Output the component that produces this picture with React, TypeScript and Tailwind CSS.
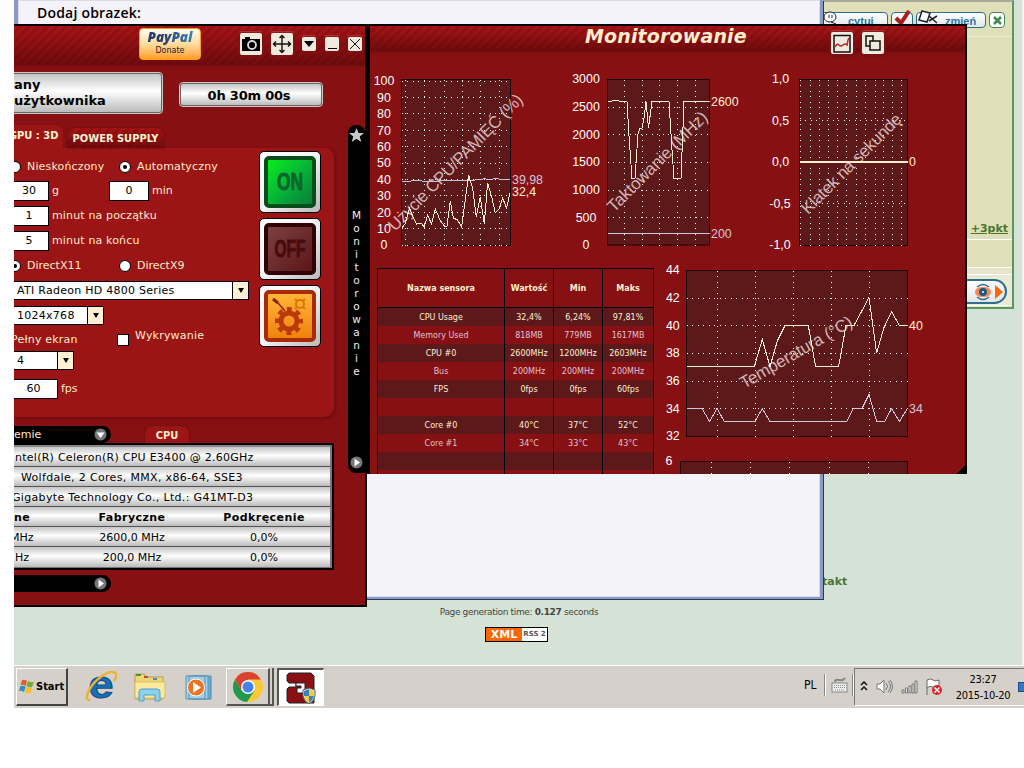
import { ReactNode } from "react";

type Line = { points: string; color: string; width?: number };
type Label = { x: number; y: number; text: string; color?: string; start?: boolean };

type ChartProps = {
  className: string;
  viewBox: string;
  plot: [number, number, number, number];
  gridX: number[];
  gridY: number[];
  lines?: Line[];
  labels: Label[];
  mark?: { x: number; y: number; angle: number; length: number; text: string };
};

const CREAM = "#fff0d2";
const BLUE = "#cfc8dc";

const Chart = ({ className, viewBox, plot, gridX, gridY, lines = [], labels, mark }: ChartProps) => {
  const [x, y, w, h] = plot;
  return (
    <svg className={className} viewBox={viewBox}>
      <rect x={x} y={y} width={w} height={h} fill="#5d181a" stroke="#1d0506" />
      <g stroke="#fff" strokeWidth="1" strokeDasharray="1 4.5" shapeRendering="crispEdges">
        {gridX.map((gx) => <line key={gx} x1={gx} x2={gx} y1={y} y2={y + h + 1} />)}
        {gridY.map((gy) => <line key={gy} x1={x} x2={x + w} y1={gy} y2={gy} />)}
      </g>
      {mark && (
        <text
          x={mark.x}
          y={mark.y}
          textLength={mark.length}
          transform={`rotate(${mark.angle} ${mark.x} ${mark.y})`}
          fontSize="17"
          fill="#d3b4b4"
        >
          {mark.text}
        </text>
      )}
      {lines.map((l, i) => (
        <polyline key={i} points={l.points} fill="none" stroke={l.color} strokeWidth={l.width ?? 1} shapeRendering="crispEdges" />
      ))}
      {labels.map((l, i) => (
        <text key={i} x={l.x} y={l.y + 4.4} fontSize="12.4" textAnchor={l.start ? "start" : "middle"} fill={l.color ?? "#fff"}>
          {l.text}
        </text>
      ))}
    </svg>
  );
};

const CpuChart = () => (
  <Chart
    className="w-[190px] h-[202px]"
    viewBox="370 60 190 202"
    plot={[401.5, 79.5, 109, 166]}
    gridX={[405.5, 424.5, 444.5, 462.5, 480.5, 499.5]}
    gridY={[81.5, 97.5, 113.5, 130.5, 146.5, 163.5, 179.5, 195.5, 212.5, 228.5, 245.5]}
    lines={[
      { color: "#c3c3dc", points: "402,181.5 420,180.5 424,181.5 455,180.5 470,180.5 480,179.5 484,178.8 490,179.5 494,178.8 510,179.5" },
      {
        color: CREAM,
        points:
          "402,228 405,224 409.6,208 413,217 416.6,224 421,223 424.3,227 427.6,215 431.6,224 435.3,209 440,220 445,227 447,226 450.3,201 453.3,218 457.6,220 461.6,227 468.6,175 472.6,188 476.3,217 480.3,197 484.3,224 487.6,183 492,198 495.3,213 499.3,209 502.6,198 506.6,208 510,193",
      },
    ]}
    mark={{ x: 395, y: 232, angle: -45.5, length: 184, text: "Użycie CPU/PAMIĘĆ (%)" }}
    labels={[
      ...[100, 90, 80, 70, 60, 50, 40, 30, 20, 10, 0].map((v) => ({ x: 384, y: 245 - v * 1.64, text: String(v) })),
      { x: 512, y: 180, text: "39,98", color: BLUE, start: true },
      { x: 512, y: 192, text: "32,4", color: CREAM, start: true },
    ]}
  />
);

const ClockChart = () => (
  <Chart
    className="w-[190px] h-[202px]"
    viewBox="560 60 190 202"
    plot={[607.5, 79.5, 102, 165.5]}
    gridX={[624.5, 642.5, 659.5, 677.5, 695.5]}
    gridY={[107.5, 134.5, 162.5, 190.5, 217.5]}
    lines={[
      {
        color: CREAM,
        points:
          "608,101.5 611,101.5 613,100.5 618,100.5 620,101.5 627,101.5 629,136 632,178.5 635,178.5 638,134 640,128 642,128 644,118 646,101.5 648.5,128 652,101.5 669,101.5 672,150 674,178.5 681,178.5 684,101.5 710,101.5",
      },
      { color: BLUE, points: "608,233.5 710,233.5" },
    ]}
    mark={{ x: 614, y: 213, angle: -45, length: 134, text: "Taktowanie (MHz)" }}
    labels={[
      ...[3000, 2500, 2000, 1500, 1000, 500, 0].map((v) => ({ x: 586, y: 245 - (v / 500) * 27.7, text: String(v) })),
      { x: 711, y: 101.5, text: "2600", color: CREAM, start: true },
      { x: 711, y: 233.5, text: "200", color: BLUE, start: true },
    ]}
  />
);

const FpsChart = () => (
  <Chart
    className="w-[200px] h-[202px]"
    viewBox="750 60 200 202"
    plot={[799.5, 79.5, 108, 166]}
    gridX={[800.5, 810.5, 819.5, 828.5, 837.5, 846.5, 856.5, 865.5, 875.5, 883.5, 892.5, 901.5]}
    gridY={[120.5, 203.5]}
    lines={[{ color: CREAM, points: "800,162 908,162", width: 2 }]}
    mark={{ x: 808, y: 215, angle: -45, length: 134, text: "Klatek na sekundę" }}
    labels={[
      { x: 780.6, y: 79, text: "1,0" },
      { x: 780.6, y: 121, text: "0,5" },
      { x: 780.6, y: 162, text: "0,0" },
      { x: 780, y: 204, text: "-0,5" },
      { x: 780, y: 245, text: "-1,0" },
      { x: 909, y: 162, text: "0", color: CREAM, start: true },
    ]}
  />
);

const TempChart = () => (
  <Chart
    className="w-[296px] h-[193px]"
    viewBox="654 262 296 193"
    plot={[686.5, 270.5, 221, 166]}
    gridX={[717.5, 755.5, 793.5, 831.5, 869.5]}
    gridY={[298.5, 325.5, 353.5, 381.5, 408.5]}
    lines={[
      {
        color: CREAM,
        points:
          "687,366.5 754.3,366.5 762.3,339.5 770,366.5 777.3,341 785,325.5 808.3,325.5 815.6,366.5 838.6,366.5 846,325.5 854,325.5 869,297.5 876.6,353 884,327.5 891.6,311.5 899.3,325.5 908,325.5",
      },
      {
        color: BLUE,
        points:
          "687,408.5 702,408.5 709.6,421.5 717,408.5 724.3,421.5 755,421.5 762.3,408.5 770,421.5 846.6,421.5 853.3,408.5 862,408.5 869,394.5 876.6,421.5 884.6,421.5 891.6,408.5 899.3,421.5 907.5,408.5",
      },
    ]}
    mark={{ x: 744, y: 389, angle: -30, length: 127, text: "Temperatura (°C)" }}
    labels={[
      ...[44, 42, 40, 38, 36, 34, 32].map((v) => ({ x: 672.8, y: 436 - (v - 32) * 13.85, text: String(v) })),
      { x: 909, y: 325.5, text: "40", color: CREAM, start: true },
      { x: 909, y: 408.5, text: "34", color: BLUE, start: true },
    ]}
  />
);

const VoltageChart = () => (
  <Chart
    className="w-[296px] h-[60px]"
    viewBox="654 455 296 60"
    plot={[680.5, 461.5, 227, 80]}
    gridX={[711.5, 750.5, 789.5, 829.5, 868.5]}
    gridY={[]}
    labels={[{ x: 669, y: 461, text: "6" }]}
  />
);

const sensors = [
  ["CPU Usage", "32,4%", "6,24%", "97,81%"],
  ["Memory Used", "818MB", "779MB", "1617MB"],
  ["CPU #0", "2600MHz", "1200MHz", "2603MHz"],
  ["Bus", "200MHz", "200MHz", "200MHz"],
  ["FPS", "0fps", "0fps", "60fps"],
  ["", "", "", ""],
  ["Core #0", "40°C", "37°C", "52°C"],
  ["Core #1", "34°C", "33°C", "43°C"],
  ["", "", "", ""],
  ["", "", "", ""],
];

const SensorTable = () => (
  <div className="mt-[6px] ml-[7px] w-[277px] shrink-0 border border-black text-[8px] text-[#fff0d2]">
    <div className="grid h-[39px] grid-cols-[127px_49px_49px_50px] divide-x divide-black border-b border-black text-center font-bold leading-[39px]">
      <div>Nazwa sensora</div>
      <div>Wartość</div>
      <div>Min</div>
      <div>Maks</div>
    </div>
    {sensors.map((row, i) => (
      <div
        key={i}
        className={`grid h-[18px] grid-cols-[127px_49px_49px_50px] divide-x divide-black text-center leading-[19px] ${
          i % 2 == 0 ? "bg-[#5d181a]" : "text-[#dfc3d3]"
        }`}
      >
        {row.map((cell, j) => <div key={j}>{cell}</div>)}
      </div>
    ))}
  </div>
);

const Stripes = ({ className, children }: { className: string; children?: ReactNode }) => (
  <div
    className={`bg-[repeating-linear-gradient(135deg,#0000_0px,#0000_3px,#50000030_3.5px,#50000030_6px,#0000_6.5px),linear-gradient(#a81416,#700c0e)] ${className}`}
  >
    {children}
  </div>
);

const IconButton = ({ className, children }: { className: string; children: ReactNode }) => (
  <div className={`flex shrink-0 items-center justify-center rounded-[2px] bg-[#f0e9de] shadow-[0_1px_2px_2px_#7c1012,0_-1px_1px_1px_#c83c3c] ${className}`}>
    {children}
  </div>
);

const MonitorWindow = () => (
  <div className="absolute left-[353px] top-6 h-[450px] w-[600px] overflow-hidden border-t-2 border-l-3 border-r-2 border-black bg-[#861012]">
    <Stripes className="flex h-[24px] justify-between shadow-[0_1px_3px_#5b080a]">
      <h1 className="ml-[215px] text-[19px] leading-[20px] font-bold italic tracking-[0.15px] text-[#ffedce]">Monitorowanie</h1>
      <div className="mr-[81px] mt-[6px] flex gap-[9px]">
        <IconButton className="h-[22px] w-[22px]">
          <svg width="18" height="19" fill="none" stroke="#111" strokeWidth="1.5">
            <rect x="1" y="1.5" width="16" height="16.5" />
            <path d="M2 13q2-4 4-2t4 0 4 0l1-5 1-2" stroke="#b3282a" />
          </svg>
        </IconButton>
        <IconButton className="h-[22px] w-[22px]">
          <svg width="16" height="16" fill="#f0e9de" stroke="#111" strokeWidth="1.5">
            <rect x="1" y="1" width="7" height="10" />
            <rect x="5" y="6" width="10" height="9" />
          </svg>
        </IconButton>
      </div>
    </Stripes>
    <div className="mt-[10px] flex font-['Liberation_Sans',sans-serif]">
      <CpuChart />
      <ClockChart />
      <FpsChart />
    </div>
    <div className="flex">
      <SensorTable />
      <div className="flex shrink-0 flex-col font-['Liberation_Sans',sans-serif]">
        <TempChart />
        <VoltageChart />
      </div>
    </div>
    <div className="absolute right-0 bottom-0 size-2 bg-[linear-gradient(135deg,#0000_50%,#000_50%)]" />
  </div>
);

const SILVER = "bg-linear-to-b from-[#c4c4c4] via-white via-45% to-[#bcbcbc]";

const Radio = ({ label, checked, className = "" }: { label: string; checked?: boolean; className?: string }) => (
  <div className={`flex items-center gap-[6px] ${className}`}>
    <span className="flex size-[12px] items-center justify-center rounded-full border border-black bg-white">
      {checked && <span className="size-1 rounded-full bg-black" />}
    </span>
    {label}
  </div>
);

const NumberField = ({ value, className }: { value: string; className: string }) => (
  <span className={`block h-5 border border-black bg-white text-center leading-[18px] text-black ${className}`}>{value}</span>
);

const Select = ({ value, className }: { value: string; className: string }) => (
  <div className={`flex h-[19px] justify-between border border-l-0 border-black bg-white pl-[3px] leading-[17px] tracking-[0.27px] text-black ${className}`}>
    {value}
    <span className="flex w-4 items-center justify-center border-l border-black bg-[#fff0d5]">
      <svg width="6" height="5"><path d="M0 0h6L3 5z" /></svg>
    </span>
  </div>
);

const PowerButton = ({ tone, children }: { tone: string; children: ReactNode }) => (
  <div className="size-[62px] rounded-[5px] border border-black bg-linear-to-br from-white via-[#f3f3f3] to-[#b9b9b9] p-1">
    <div className={`flex size-full items-center justify-center rounded-[5px] border-[4px] ${tone}`}>{children}</div>
  </div>
);

const FaceText = ({ text, fill }: { text: string; fill: string }) => (
  <svg width="40" height="30">
    <text x="20" y="23" textAnchor="middle" textLength={text == "ON" ? 26 : 31} lengthAdjust="spacingAndGlyphs" fontSize="24" fontWeight="bold" stroke={fill} fill={fill} fontFamily="Liberation Sans, sans-serif">
      {text}
    </text>
  </svg>
);

const Gears = () => (
  <svg width="42" height="42" viewBox="0 0 42 42" fill="none">
    <circle cx="20" cy="26" r="8" stroke="#b93a0a" strokeWidth="5" />
    <circle cx="20" cy="26" r="12" stroke="#b93a0a" strokeWidth="4" strokeDasharray="5 4.42" strokeDashoffset="2.5" />
    <path d="M4 4l5 4" stroke="#8d2208" strokeWidth="3" />
    <path d="M9 8l7 8" stroke="#8d2208" strokeWidth="1.5" />
    <circle cx="31" cy="9" r="4" stroke="#e07509" strokeWidth="2" />
    <path d="M26 4l2 2m6 6l2 2m0-10l-2 2m-6 6l-2 2" stroke="#e07509" strokeWidth="2" />
  </svg>
);

const ArrowDot = ({ down }: { down?: boolean }) => (
  <svg width="13" height="13" className={down ? "rotate-90" : ""}>
    <circle cx="6.5" cy="6.5" r="6" fill="#777" />
    <path d="M4.5 2.5l5.5 4-5.5 4z" fill="#fff" />
  </svg>
);

const TitleBar = () => (
  <Stripes className="flex h-[38px] items-start pl-[125px] shadow-[0_1px_3px_#5b080a]">
    <div className="mt-[2px] h-8 w-[62px] rounded-[4px] border border-[#ff9b19] bg-linear-to-b from-[#fffdf5] via-[#ffdc9c] to-[#ff9d19] text-center">
      <div className="bg-linear-to-r from-[#253b70] from-35% to-[#3d8fc4] bg-clip-text font-['Open_Sans',sans-serif] text-[13.5px] leading-[17px] font-extrabold text-transparent italic">
        PayPal
      </div>
      <div className="text-[8px] leading-[10px] text-[#222]">Donate</div>
    </div>
    <IconButton className="mt-[7px] ml-[39px] h-[22px] w-[22px]">
      <svg width="20" height="16">
        <path d="M1 3h3V1h5v2h10v12H1z" />
        <circle cx="11" cy="9" r="4" fill="none" stroke="#d9d9d9" strokeWidth="1.8" />
      </svg>
    </IconButton>
    <IconButton className="mt-[7px] ml-[9px] h-[22px] w-[22px]">
      <svg width="20" height="20" fill="none" stroke="#111" strokeWidth="1.4">
        <path d="M10 2v16M2 10h16M7.5 4L10 1.5 12.5 4M7.5 16l2.5 2.500 2.500-2.500M4 7.500L1.500 10 4 12.500M16 7.500l2.500 2.500-2.500 2.500" />
      </svg>
    </IconButton>
    <IconButton className="mt-[11px] ml-[9px] h-[14px] w-[14px]">
      <svg width="10" height="6"><path d="M0 0h10L5 6z" /></svg>
    </IconButton>
    <IconButton className="mt-[11px] ml-[9px] h-[14px] w-[14px]">
      <span className="mt-[9px] h-px w-[9px] bg-black" />
    </IconButton>
    <IconButton className="mt-[11px] ml-[9px] h-[14px] w-[14px]">
      <svg width="12" height="12" stroke="#111"><path d="M1 1l10 10M11 1L1 11" /></svg>
    </IconButton>
  </Stripes>
);

const TestForm = () => (
  <div className="flex h-[269px] w-80 justify-between rounded-tr-[9px] rounded-br-[9px] bg-[#9b1516] pr-[13px] shadow-[1px_1px_3px_#640b0d]">
    <div className="w-[236px] pt-[11px]">
      <div className="flex h-4 items-center tracking-[0.15px]">
        <Radio label="Nieskończony" className="-ml-[5px] w-[110px]" />
        <Radio label="Automatyczny" checked />
      </div>
      <div className="mt-[6px] flex items-center">
        <NumberField value="30" className="w-[35px] border-l-0 pr-[4px]" />
        <span className="ml-[3px]">g</span>
        <NumberField value="0" className="ml-[50px] w-10" />
        <span className="ml-[3px]">min</span>
      </div>
      <div className="mt-[5px] flex items-center gap-[3px] tracking-[0.15px]">
        <NumberField value="1" className="w-[35px] border-l-0 pr-[4px]" />
        minut na początku
      </div>
      <div className="mt-[5px] flex items-center gap-[3px] tracking-[0.15px]">
        <NumberField value="5" className="w-[35px] border-l-0 pr-[4px]" />
        minut na końcu
      </div>
      <div className="mt-[7px] flex h-4 items-center">
        <Radio label="DirectX11" checked className="-ml-[5px] w-[110px]" />
        <Radio label="DirectX9" />
      </div>
      <Select value="ATI Radeon HD 4800 Series" className="mt-[7px] w-[235px]" />
      <Select value="1024x768" className="mt-[6px] w-[90px]" />
      <div className="mt-[6px] flex h-[19px] tracking-[0.2px]">
        <span className="-ml-[3px] w-[106px] leading-[17px]">Pełny ekran</span>
        <span className="mt-[3px] size-[12px] border border-black bg-white" />
        <span className="ml-[6px] leading-[9px]">Wykrywanie</span>
      </div>
      <Select value="4" className="mt-[1px] w-[60px]" />
      <div className="mt-[9px] flex items-center gap-[3px]">
        <NumberField value="60" className="w-11 border-l-0 pr-[4px]" />
        fps
      </div>
    </div>
    <div className="mt-[3px] flex flex-col gap-[5px]">
      <PowerButton tone="border-[#074d19] bg-linear-to-br from-[#08ee10] to-[#077e3c]"><FaceText text="ON" fill="#08672d" /></PowerButton>
      <PowerButton tone="border-[#300208] bg-linear-to-br from-[#7c4142] to-[#5b1517]"><FaceText text="OFF" fill="#470b10" /></PowerButton>
      <PowerButton tone="border-[#a92a08] bg-linear-to-b from-[#ffb437] to-[#f08208]"><Gears /></PowerButton>
    </div>
  </div>
);

const HardwareTable = () => (
  <div className="h-[127px] w-80 border-t-2 border-r-2 border-b-2 border-black bg-[#777] pr-[2px] text-[11px] leading-[21px] text-black">
    <div className="divide-y divide-[#555] border-t-2 border-[#888]">
      <div className={`h-5 pl-[1px] tracking-[0.26px] ${SILVER}`}>ntel(R) Celeron(R) CPU E3400 @ 2.60GHz</div>
      <div className={`h-5 pl-[7px] tracking-[0.33px] ${SILVER}`}>Wolfdale, 2 Cores, MMX, x86-64, SSE3</div>
      <div className={`h-5 tracking-[0.33px] ${SILVER}`}><span className="-ml-[2px]">Gigabyte Technology Co., Ltd.: G41MT-D3</span></div>
      <div className={`flex h-5 font-bold tracking-[0.45px] ${SILVER}`}>
        <span className="w-[52px]">ne</span><span className="w-[132px] text-center">Fabryczne</span><span className="w-[132px] text-center">Podkręcenie</span>
      </div>
      <div className={`flex h-5 ${SILVER}`}>
        <span className="w-[52px]"><span className="-ml-[4px]">MHz</span></span><span className="w-[132px] text-center">2600,0 MHz</span><span className="w-[132px] text-center">0,0%</span>
      </div>
      <div className={`flex h-5 ${SILVER}`}>
        <span className="w-[52px] pl-px">Hz</span><span className="w-[132px] text-center">200,0 MHz</span><span className="w-[132px] text-center">0,0%</span>
      </div>
    </div>
  </div>
);

const TesterWindow = () => (
  <div className="absolute left-0 top-6 h-[583px] w-[353px] overflow-hidden border-t-2 border-r-2 border-b-2 border-black bg-[#861012]">
    <TitleBar />
    <div className="flex h-[61px] items-start text-[13px] font-bold text-black">
      <div className={`mt-[9px] h-[40px] w-[148px] rounded-r-[3px] border border-l-0 border-[#666] leading-4 outline outline-[#c9c9c9] ${SILVER}`}>
        <div className="-mt-px pt-[4px]">any<br />użytkownika</div>
      </div>
      <div className={`mt-[19px] ml-[18px] h-[23px] w-[142px] rounded-[3px] border border-[#666] text-center leading-[23px] outline outline-[#c9c9c9] ${SILVER}`}>
        <span className="mr-[4px] tracking-[-0.2px]">0h 30m 00s</span>
      </div>
    </div>
    <div className="flex">
      <div className="w-[334px] shrink-0 text-[11px] text-[#ffe9c9]">
        <div className="flex h-[23px] items-end gap-1 font-['DejaVu_Sans_Condensed','DejaVu_Sans',sans-serif] font-bold text-[#fff0d0]">
          <div className="h-[23px] w-[49px] rounded-tr-[8px] bg-[#9b1516] leading-[22px]"><span className="-ml-[5px] whitespace-nowrap">GPU : 3D</span></div>
          <Stripes className="h-5 w-[97px] rounded-t-[7px] text-center leading-[21px] shadow-[0_0_2px_#5b080a]">POWER SUPPLY</Stripes>
        </div>
        <TestForm />
        <div className="mt-[9px] flex h-[17px]">
          <div className="flex h-[17px] w-[97px] items-center justify-between rounded-r-full bg-black pr-[4px] leading-[19px]">emie<ArrowDot down /></div>
          <div className="ml-[34px] h-[17px] w-[44px] rounded-t-[7px] bg-[#9b1516] text-center font-['DejaVu_Sans_Condensed','DejaVu_Sans',sans-serif] font-bold leading-[19px] shadow-[0_0_2px_#5b080a]">CPU</div>
        </div>
        <HardwareTable />
        <div className="mt-[5px] flex h-[17px] w-[97px] items-center justify-end rounded-r-full bg-black pr-[4px]"><ArrowDot /></div>
      </div>
      <div className="flex h-[348px] w-[17px] shrink-0 flex-col items-center rounded-t-[8px] rounded-bl-[8px] bg-black pt-[3px] pb-1 text-[#eee]">
        <svg width="15" height="15" viewBox="0 0 15 15"><path d="M7.500 0l2 5h5.500l-4.300 3.500L12.300 14 7.500 10.800 2.700 14l1.600-5.500L0 5h5.500z" fill="#c9c9c9" /></svg>
        <div className="mt-[66px] flex flex-1 flex-col items-center text-[10.5px] leading-[13px]">
          {"Monitorowanie".split("").map((c, i) => <span key={i}>{c}</span>)}
        </div>
        <ArrowDot />
      </div>
    </div>
  </div>
);

const ForumPanel = () => (
  <div className="absolute left-[808px] top-0 h-[309px] w-[192px] border-t-2 border-r-2 border-b-2 border-t-[#a9a89b] border-r-[#5b985f] border-b-[#5b985f] bg-[#dfdfb8]">
    <div className="mt-[10px] flex h-[16px] gap-[3px] font-['Liberation_Sans',sans-serif] text-[11px] font-bold leading-[16px] text-[#2876a5]">
      <div className="flex w-[66px] rounded-r-[4px] border border-[#2c6f8b] bg-linear-to-b from-white to-[#dfe7ea]">
        <svg width="16" height="14" className="-mt-[2px]" fill="#fff" stroke="#222"><ellipse cx="7" cy="6" rx="6" ry="5" /><path d="M6 4v3M9 4v3M8 11l5 2" /></svg>
        <span className="ml-[9px]">cytuj</span>
      </div>
      <div className="w-[22px] rounded-[4px] border border-[#2c6f8b] bg-linear-to-b from-white to-[#dfe7ea]">
        <svg width="20" height="18" className="-mt-[3px]" fill="none" stroke="#a91c20" strokeWidth="4"><path d="M4 8l5 5 8-12" /></svg>
      </div>
      <div className="flex w-[70px] rounded-[4px] border border-[#2c6f8b] bg-linear-to-b from-white to-[#dfe7ea]">
        <svg width="22" height="16" className="-mt-[3px]" fill="#fff" stroke="#222" strokeWidth="1.5"><path d="M5 1l8 2-3 9-8-2zM12 6l8 7m0-7l-8 5" /></svg>
        <span className="ml-[6px]">zmień</span>
      </div>
      <div className="flex w-4 items-center justify-center rounded-[4px] border border-[#43885a] bg-white">
        <svg width="9" height="9" stroke="#438a51" strokeWidth="2.500"><path d="M1 1l7 7M8 1L1 8" /></svg>
      </div>
    </div>
    <div className="mt-[8px] h-px bg-[#eeeecb]" />
    <div className="mt-[184px] flex h-[18px] items-center justify-end border-b border-[#dfdfb8] pr-[4px] text-[11px] font-bold text-[#4b7431] underline">+3pkt</div>
    <div className="h-[28px] border-t border-white" />
    <div className="h-[8px] border-y border-white bg-[#e6e5cc]" />
    <div className="h-[31px] border-b border-white bg-[#eae9d3] pt-[4px] pr-[5px]">
      <div className="ml-auto flex h-[25px] w-[50px] items-center justify-end gap-[3px] rounded-r-full border-2 border-[#2c6f8b] bg-linear-to-b from-white to-[#e3e6e6] pr-[2px]">
        <svg width="18" height="18">
          <path d="M1 9q0-5 8-5t8 5-8 5-8-5" fill="#ff8653" />
          <path d="M3 4q6-5 12 0M3 14q6 5 12 0" fill="none" stroke="#2c6f8b" strokeWidth="1.5" />
          <circle cx="9" cy="9" r="4" fill="#195c80" /><circle cx="9" cy="9" r="1" fill="#fff" />
        </svg>
        <svg width="8" height="14"><path d="M0 0l8 7-8 7z" fill="#ff6700" /></svg>
      </div>
    </div>
  </div>
);

const Taskbar = () => (
  <div className="absolute left-0 top-[665px] flex h-[43px] w-[1010px] overflow-hidden border-t border-white bg-[#d5d0c9] [&>*]:shrink-0">
    <div className="mt-[2px] ml-[2px] flex h-[38px] w-[52px] items-center border-t border-r-2 border-b-2 border-l border-t-white border-r-[#444] border-b-[#444] border-l-white pl-[2px] text-[11px] font-bold text-black">
      <svg width="16" height="15" viewBox="0 0 16 15">
        <path d="M3 1q3-1 5 1L6.500 7q-3-2-5-1z" fill="#e65a26" />
        <path d="M9 2q3 2 6 1l-2 5q-3 1-5.500-1z" fill="#6eae3a" />
        <path d="M1.500 7q3-1 5 1L5 13q-3-2-5-1z" fill="#328cc5" />
        <path d="M7.500 8q3 2 6 1l-2 5q-3 1-5.500-1z" fill="#f8bd28" />
      </svg>
      <span className="ml-px pt-px font-['DejaVu_Sans_Condensed','DejaVu_Sans',sans-serif]">Start</span>
    </div>
    <svg width="32" height="32" className="mt-[5px] ml-[17px]">
      <text x="16" y="27" textAnchor="middle" textLength="25" lengthAdjust="spacingAndGlyphs" fontFamily="Liberation Sans, sans-serif" fontSize="38" fontWeight="bold" fill="#1770b5" stroke="#174c83">e</text>
      <path d="M5 29C-3 30 5 13 17 5s18-3 12 5" fill="none" stroke="#e8b431" strokeWidth="2.500" />
    </svg>
    <svg width="34" height="32" className="mt-[6px] ml-[16px]">
      <path d="M2 2h9l2 3h17v22H2z" fill="#efd778" stroke="#b99b45" />
      <path d="M3 3h5" stroke="#3f963d" strokeWidth="2" />
      <path d="M11 5h4" stroke="#c9452c" strokeWidth="2" />
      <path d="M20 7h4" stroke="#3a8fc4" strokeWidth="2" />
      <path d="M2 10h30v16H2z" fill="#f9eaa0" stroke="#d8bd62" />
      <path d="M6 29V20q0-3 3-3h15q3 0 3 3v9h-5v-6H11v6z" fill="#8fd0ee" stroke="#4b9fc9" />
    </svg>
    <svg width="30" height="30" className="mt-[7px] ml-[17px]">
      <path d="M8 3h19v23H8z" fill="#70acce" stroke="#458eb6" />
      <path d="M5 3h19v23H5zM2 3h19v23H2z" fill="#a5cde4" stroke="#5594b9" />
      <circle cx="12" cy="14.500" r="8.500" fill="#ee731e" stroke="#fff" />
      <path d="M9 9l8 5.500L9 20z" fill="#fff" />
    </svg>
    <div className="mt-[2px] ml-[12px] flex h-[38px] w-[44px] items-center justify-center border-t border-r-2 border-b-2 border-l border-t-white border-r-[#555] border-b-[#555] border-l-white">
      <svg width="30" height="30" viewBox="0 0 30 30">
        <circle cx="15" cy="15" r="15" fill="#f7c934" />
        <path d="M15 7.500H28A15 15 0 0 0 2 7.500L8.500 19z" fill="#da4332" />
        <path d="M2 7.500a15 15 0 0 0 12 22.500l7.500-11.300H8.500z" fill="#24974e" />
        <circle cx="15" cy="15" r="7" fill="#fff" />
        <circle cx="15" cy="15" r="5.500" fill="#4482ea" />
      </svg>
    </div>
    <div className="mt-[2px] h-[38px] w-[4px] border-r-2 border-b-2 border-[#555]" />
    <div className="mt-[2px] ml-[3px] flex h-[38px] w-[47px] items-center justify-center border-t-2 border-r border-b border-l-2 border-t-[#555] border-r-white border-b-white border-l-[#555] bg-white">
      <svg width="30" height="32" viewBox="0 0 30 32" className="mr-px">
        <path d="M3 1h22l3 3v27H3l-2-2V17l2-2h7v-4H3L1 9V3z" fill="#8a1014" stroke="#222" />
        <path d="M10 11h9v10h-8v-5h4v-2h-5z" fill="#fff" stroke="#222" />
        <path d="M23 16l6 2v6q-1 5-6 8-5-3-6-8v-6z" fill="#fff" stroke="#555" />
        <path d="M18 19l5-2v7h-5zM23 24h5q-1 4-5 7z" fill="#3b80bd" />
        <path d="M23 17l5 2v5h-5zM18 24h5v7q-4-3-5-7z" fill="#f2cb39" />
      </svg>
    </div>
    <div className="ml-[480px] w-[20px] pt-[11px] font-['DejaVu_Sans_Condensed','DejaVu_Sans',sans-serif] text-[12px] leading-4 text-black">PL</div>
    <div className="mt-[8px] h-[22px] w-[2px] border-r border-l border-r-white border-l-[#888]" />
    <svg width="18" height="18" className="mt-[11px] ml-[5px]" fill="none" stroke="#888">
      <rect x="1" y="6" width="15" height="9" fill="#eee" />
      <path d="M3 8.500h11M3 10.500h11M4 13h9" strokeDasharray="1 1" />
      <path d="M4 5q0-3 4-2t6-2" strokeWidth="2" />
    </svg>
    <div className="mt-[8px] ml-[3px] h-[22px] w-[2px] border-r border-l border-r-white border-l-[#888]" />
    <div className="mt-[2px] flex h-[38px] w-[175px] border-t border-b border-l border-t-[#777] border-b-white border-l-[#777] [&>*]:shrink-0">
      <svg width="8" height="11" className="mt-[12px] ml-[5px]" fill="none" stroke="#111" strokeWidth="1.500"><path d="M1 4l3-3 3 3M1 9l3-3 3 3" /></svg>
      <svg width="18" height="18" className="mt-[9px] ml-[8px]" fill="none" stroke="#777">
        <path d="M1 6h3l4-4v13l-4-4H1z" fill="#fff" /><path d="M10 5q3 3 0 7M12 3q5 5 0 11M14 2q5 6 0 13" />
      </svg>
      <svg width="18" height="14" className="mt-[11px] ml-[7px]" fill="#eee" stroke="#777">
        <path d="M1 10h2v3H1zM4.500 8h2v5h-2zM8 6h2v7H8zM11 4h2v9h-2zM14 1h2v12h-2z" />
      </svg>
      <svg width="18" height="18" className="mt-[9px] ml-[6px]">
        <path d="M2 17V2q4-2 6 0t6 0v8q-3 1-6-1t-6 1" fill="#fff" stroke="#666" />
        <circle cx="12" cy="12" r="5" fill="#d8232b" /><path d="M9.500 9.500l5 5m0-5l-5 5" stroke="#fff" strokeWidth="1.500" />
      </svg>
      <div className="mt-[3px] ml-[10px] w-[60px] text-center font-['DejaVu_Sans_Condensed','DejaVu_Sans',sans-serif] text-[11px] leading-4 tracking-[-0.3px] text-black">
        23:27<br />2015-10-20
      </div>
      <div className="mt-[13px] ml-[5px] h-[10px] w-5 border border-[#214b84] bg-[#307ac7]" />
    </div>
  </div>
);

export default function App() {
  return (
    <div className="h-[768px] w-[1024px] overflow-hidden bg-white pl-[14px] font-['DejaVu_Sans',sans-serif]">
      <div className="relative h-[708px] w-[1010px] overflow-hidden bg-[#d5e3d7]">
        <div className="ml-auto h-full w-[2px] bg-[#f3f3f3]" />
        <ForumPanel />
        <div className="absolute left-[808px] top-[575px] text-[11px] leading-[14px] font-bold text-[#4b7431]">takt</div>
        <div className="absolute left-0 top-0 h-[599px] w-[809px] border-r-3 border-b-2 border-l-4 border-[#899bc5] bg-[#f4f3f9] shadow-[inset_0_0_0_1px_#dcdce8,1px_1px_0_#293858]">
          <p className="mt-[5px] ml-[19px] font-['Open_Sans',sans-serif] text-[14px] leading-4 font-semibold tracking-[0.2px] text-black">Dodaj obrazek:</p>
        </div>
        <div className="absolute left-[405px] top-[604px] flex w-[200px] flex-col items-center">
          <p className="text-[9px] leading-4 tracking-[-0.35px] whitespace-nowrap text-[#444]">Page generation time: <b>0.127</b> seconds</p>
          <div className="mt-[7px] mr-[5px] flex h-[15px] w-[63px] border border-black bg-white text-[11px] leading-[14px] font-bold">
            <span className="w-9 bg-[#ff6600] text-center text-white">XML</span>
            <span className="flex-1 text-center text-[7px] leading-[13px] whitespace-nowrap text-[#555]">RSS 2</span>
          </div>
        </div>
        <TesterWindow />
        <MonitorWindow />
        <Taskbar />
      </div>
    </div>
  );
}
